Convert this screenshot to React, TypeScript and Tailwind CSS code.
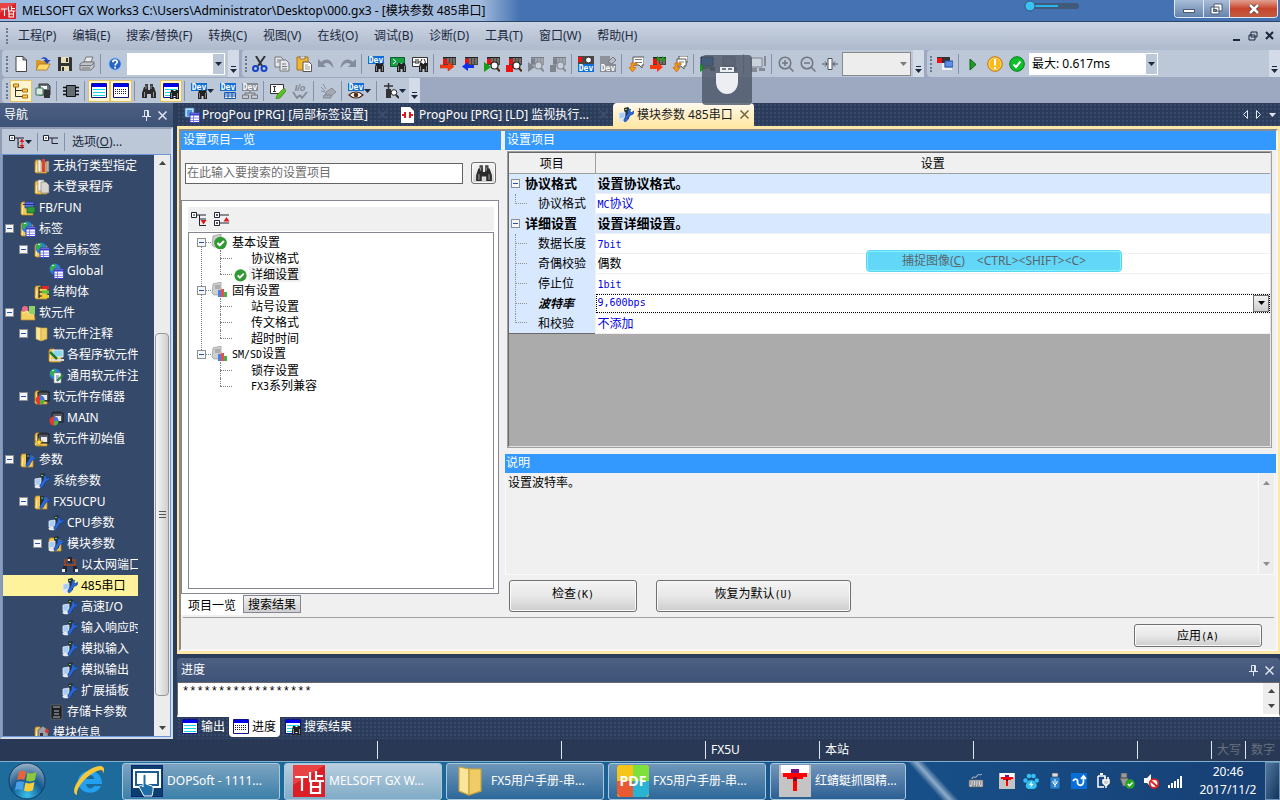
import { Fragment, type ReactNode } from 'react'

const UI = "font-[family-name:'Noto_Sans','Noto_Sans_CJK_SC',sans-serif]"
const SONG = "font-[family-name:'Noto_Sans_CJK_SC',sans-serif]"

/* ---------- shared icon parts ---------- */

const Plc = ({ off = false }: { off?: boolean }) => (
  <g>
    <path d="M3 1h13v8H3z" fill={off ? '#8d929b' : '#4a4742'} />
    <path d="M3 3h4v5H3z" fill={off ? '#7b808a' : '#f01010'} />
    <path d="M8 2v6M11 2v6M14 2v6" stroke={off ? '#b5bac4' : '#9a958c'} />
    <path d="M3 1.5h13" stroke={off ? '#777c86' : '#222'} />
  </g>
)

const Lens = ({ off = false }: { off?: boolean }) => (
  <g>
    <circle cx="10.5" cy="9.5" r="3.5" fill={off ? '#c9ced8' : '#fff'} stroke={off ? '#858a94' : '#222'} strokeWidth="1.2" />
    <path d="M12.8 12l3 3.4" stroke={off ? '#858a94' : '#4a2c10'} strokeWidth="2" />
  </g>
)

const Bino = () => (
  <g>
    <path d="M8 7h2.500v1h2V7H15l1 4v5h-3.500v-3h-2v3H7v-5z" fill="#222" />
    <path d="M8.500 10v5M14.500 10v5" stroke="#888" />
  </g>
)

const Dev = ({ y = 0, off = false }: { y?: number; off?: boolean }) => (
  <g>
    <path d={`M0 ${y}h16v8H0z`} fill={off ? '#868b95' : '#0f6fd6'} />
    <text x="8" y={y + 6.8} textAnchor="middle" fontSize="8" fontWeight="bold" fontFamily="DejaVu Sans Mono" fill="#fff">Dev</text>
  </g>
)

const Folder = () => (
  <g>
    <path d="M1 4l1-2h4l1 2h6v11H2l-1-1z" fill="#f3c65a" stroke="#b98a25" strokeWidth=".8" />
    <path d="M2 14l1-8" stroke="#fff0b8" />
  </g>
)

const Wrench = () => (
  <path d="M15.800 4l-2.300 1.500-1.500-1L12.500 2c-2.600.2-3.400 2.200-2.700 4L6 12.500c-.6 1.800 1.200 3 2.600 1.600L12.400 8c2 .3 3.900-1.500 3.400-4z" fill="#2a68d8" stroke="#123c86" strokeWidth=".6" />
)

const Tower = () => (
  <g>
    <path d="M6 1l4-1 1 1v11l-4 1z" fill="#2d3138" />
    <path d="M7 2.500h2" stroke="#68e04c" />
    <path d="M1 6l6-1v6l-6 1z" fill="#a9cdf2" stroke="#e4edf8" strokeWidth=".8" />
    <ellipse cx="4" cy="13.500" rx="3.500" ry="1.800" fill="#e6e8f0" />
  </g>
)

const Globe = () => (
  <g>
    <circle cx="7" cy="6" r="5.500" fill="#2b7fd4" />
    <path d="M3 3c2-3 5-2 5 0s-2 2-2 4-3 1-4-1zM9 5c2-1 3 1 2 3s-3 1-3-1z" fill="#37b04a" />
    <path d="M4 2.500h2" stroke="#cfe9ff" />
  </g>
)

const Grid = () => (
  <g>
    <path d="M6 6h9.500v9.500H6z" fill="#fff" stroke="#3c3cc8" />
    <path d="M6 7.500h9.500" stroke="#3c3cc8" strokeWidth="2" />
    <path d="M9.500 8v8M6 11h10M6 13.500h10" stroke="#6a6ae0" strokeWidth=".8" />
  </g>
)

const Chip = () => (
  <g>
    <path d="M4 3h11v9H4z" fill="#555a62" stroke="#15181c" />
    <path d="M6 1v2M9 1v2M12 1v2" stroke="#222" />
    <path d="M7 6h6v5H7z" fill="#e8eaee" />
  </g>
)

const Pie = () => (
  <g>
    <circle cx="6" cy="11" r="4.500" fill="#e23a2e" />
    <path d="M6 11V6.500A4.500 4.500 0 0110.500 11z" fill="#3a7be0" />
    <path d="M6 11h4.500A4.500 4.500 0 016 15.500z" fill="#48b848" />
  </g>
)

const Bubble = () => (
  <path d="M5 1h11v8h-2v3l-3-3H5z" fill="#fff" stroke="#555" />
)

const OrangeArrow = () => (
  <path d="M3 7h6v2H5.500v2.500H8L4.500 16 1 11.500h2z" fill="#f7981d" stroke="#c86c06" strokeWidth=".7" />
)

const Win = ({ dotted = false }: { dotted?: boolean }) => (
  <g>
    <path d="M.5.5h15v14H.5z" fill="#fff" stroke="#10108a" />
    <path d="M1 1h14v3H1z" fill="#0000f0" />
    {dotted ? (
      <path d="M2 6.500h12M2 8.500h12M2 10.500h12" stroke="#222" strokeDasharray="1 1" />
    ) : (
      <path d="M2 6.500h12M2 9.500h12M2 12.500h12" stroke="#12d6e4" />
    )}
  </g>
)

const icons: Record<string, ReactNode> = {
  new: <path d="M3 .5h7l3.500 3.500v11.500H3zM10 .5V4h3.500" fill="#fff" stroke="#444" />,
  open: (
    <g>
      <path d="M1 4h4l1 1h6v9H1z" fill="#d79a28" />
      <path d="M1 14l3-6h11l-3 6z" fill="#ffd86a" stroke="#a8741a" strokeWidth=".8" />
      <path d="M6 3c2-3 6-2 7 1h2.500L12 8 8.500 4h2c-1-1.500-2.500-1.500-4.500-1z" fill="#2046b8" />
    </g>
  ),
  save: (
    <g>
      <path d="M1 1h13l1 1v13H1z" fill="#333" />
      <path d="M4 1h8v6H4zM4 10h8v5H4z" fill="#e6e0b8" />
      <path d="M9 2h2v4H9zM5 11h2v4H5z" fill="#333" />
    </g>
  ),
  print: (
    <g stroke="#777" fill="#bfc3cb">
      <path d="M5 6l2-5h7l-2 5z" fill="#e8eaee" />
      <path d="M1 8l3-2h11v5l-3 3H1z" />
      <path d="M1 9.500h11M12 9.500l3-2.500M3 12h8" />
    </g>
  ),
  help: (
    <g>
      <circle cx="8" cy="8" r="6.500" fill="#2565c4" stroke="#a8c4ee" strokeWidth="1.500" />
      <path d="M5.800 6.300c0-3 4.600-2.800 4.500-.2 0 1.500-2.200 1.600-2.200 3.300" fill="none" stroke="#fff" strokeWidth="1.700" />
      <path d="M7.200 10.800h1.800v1.800H7.200z" fill="#fff" />
    </g>
  ),
  cut: (
    <g fill="none">
      <path d="M4 0l6 10M13 0L6 10" stroke="#333" strokeWidth="2" />
      <circle cx="3.500" cy="12.500" r="2.500" stroke="#1544c8" strokeWidth="2" />
      <circle cx="12" cy="12.500" r="2.500" stroke="#1544c8" strokeWidth="2" />
    </g>
  ),
  copy: (
    <g fill="#e4e8ef" stroke="#777">
      <path d="M1 1h6l2 2v8H1z" />
      <path d="M6 4h6l3 3v8H6z" />
      <path d="M3 4h3M3 6h2M8 8h4M8 10.500h5M8 13h5" />
    </g>
  ),
  paste: (
    <g>
      <path d="M1 1h11v13H1z" fill="#f2b632" stroke="#a87716" />
      <path d="M4 0h5v3H4z" fill="#ddd" stroke="#555" strokeWidth=".6" />
      <path d="M7 6h6l2.500 2.500v7H7z" fill="#fff" stroke="#555" />
      <path d="M9 9h3M9 11h5M9 13h5" stroke="#999" />
    </g>
  ),
  undo: <path d="M0 3v8h8L5.500 8.500c3-3 7-1 10 4C15 4 8 1 3.500 6z" fill="#858c99" />,
  redo: <path d="M16 3v8H8l2.500-2.500c-3-3-7-1-10 4C1 4 8 1 12.500 6z" fill="#858c99" />,
  devFind: <g><Dev /><Bino /></g>,
  cmdFind: <g><path d="M.5 1.500h14v9H.5z" fill="#16a046" stroke="#086428" /><path d="M3 3l3 2.500L3 8M7 8h5" stroke="#fff" fill="none" /><Bino /></g>,
  ladderFind: <g><path d="M.5 1.500h15v9H.5z" fill="#fff" stroke="#333" /><path d="M1 6h3M4 3v5M6 3v5M6 6h2M10 3L8.500 6 10 8M12 3l1.500 3L12 8" stroke="#222" fill="none" /><Bino /></g>,
  write: <g><Plc /><path d="M0 9h8V6l6 4.500L8 15v-3H0z" fill="#fa3a10" stroke="#b81c00" strokeWidth=".5" /></g>,
  read: <g><Plc /><path d="M12 9H6V6l-6 4.500L6 15v-3h6z" fill="#1030f0" /></g>,
  monStart: <g><Plc /><path d="M0 6l7 5-7 5z" fill="#12a012" /><Lens /></g>,
  monStop: <g><Plc /><path d="M0 9h7v7H0z" fill="#f01010" /><Lens /></g>,
  monStartOff: <g><Plc off /><path d="M0 6l7 5-7 5z" fill="#7f858f" /><Lens off /></g>,
  monStopOff: <g><Plc off /><path d="M0 9h6v7H0z" fill="#7f858f" /><Lens off /></g>,
  devMon: <g><path d="M0 0h16v8H0z" fill="#4a4742" /><path d="M0 1h4v5H0z" fill="#f01010" /><circle cx="10.500" cy="4" r="3" fill="#fff" stroke="#222" /><Dev y={8} /></g>,
  devMonOff: <g><path d="M0 0h10v8H0z" fill="#8d929b" /><path d="M8 6l5-5 3 3-4 4z" fill="#b9bec8" stroke="#777" /><Dev y={8} off /></g>,
  comment: <g><Bubble /><path d="M7 3.500h7M7 6.500h7" stroke="#777" /><OrangeArrow /></g>,
  verify: <g><Plc /><path d="M0 9h7V6l6 5-6 5v-3H0z" fill="#fa3a10" /><path d="M7 0l4 3-4 3zM12 0l4 3-4 3z" fill="#12a012" /></g>,
  comment2: <g><path d="M7 0h9v6H7z" fill="#fff" stroke="#555" /><path d="M5 3h9v7h-2v3l-3-3H5z" fill="#fff" stroke="#555" /><path d="M7 6h5" stroke="#777" /><OrangeArrow /></g>,
  simOn: <g><path d="M1 1h12v9H1z" fill="#2c79cc" stroke="#222" /><path d="M3 12h8" stroke="#222" /><path d="M0 8l6 4-6 4z" fill="#12a012" /><path d="M10 11h5v4h-5z" fill="#555" /></g>,
  simOff: <g><path d="M1 1h12v9H1z" fill="#a0a6b1" stroke="#6a7078" /><path d="M0 11h6v5H0zM10 11h5v4h-5z" fill="#777d88" /></g>,
  simSave: <g><path d="M1 2h11v9H1z" fill="#ccd2dc" stroke="#7d838d" /><path d="M1 12h6v4H1zM9 12h6v3H9zM14 0h2v10h-2z" fill="#858b95" /></g>,
  zoomIn: <g fill="none" stroke="#6f7681" strokeWidth="1.500"><circle cx="7" cy="7" r="5.800" /><path d="M4 7h6M7 4v6M11.500 11.500l4 4" /></g>,
  zoomOut: <g fill="none" stroke="#6f7681" strokeWidth="1.500"><circle cx="7" cy="7" r="5.800" /><path d="M4 7h6M11.500 11.500l4 4" /></g>,
  fit: <g><path d="M6 2.500h4v11H6z" fill="#fff" stroke="#4f5661" /><path d="M0 8h5M16 8h-5M3 5.500L5 8l-2 2.500M13 5.500L11 8l2 2.500" stroke="#4f5661" fill="none" /></g>,
  usb: <g><path d="M0 1h13v6H0z" fill="#333" /><path d="M0 2h5v5H0z" fill="#f01010" /><path d="M8 5h8v6H8z" fill="#5b8fe8" stroke="#2a50a8" /><path d="M6 7v6h5M11 13h4" stroke="#fff" fill="none" strokeWidth="1.500" /></g>,
  play: <path d="M5 3l6 5.500L5 14z" fill="#1f9a28" stroke="#0d6214" />,
  warn: <g><circle cx="8" cy="8" r="7.300" fill="#fbb91c" stroke="#c8780a" /><circle cx="8" cy="8" r="6" fill="none" stroke="#ffe39a" strokeWidth=".7" /><path d="M8 3v6.500M8 11v2" stroke="#fff" strokeWidth="2" /></g>,
  ok: <g><circle cx="8" cy="8" r="7.300" fill="#0fbf2c" stroke="#0a7a1c" /><path d="M4.500 8.500L7 11l4.500-5.500" stroke="#fff" strokeWidth="2" fill="none" /></g>,
  navTree: <g fill="#fff" stroke="#a86a12"><path d="M2.500 3v10.500H9M2.500 7.500H9" fill="none" stroke="#333" /><path d="M.5 1h5v3h-5zM9.500 6h5v3h-5zM9.500 12h5v3h-5z" fill="#ffcf50" /></g>,
  conn: <g><path d="M4 1h9l2 2v9H4z" fill="#6c727a" stroke="#333" /><path d="M6 3h6v3H6z" fill="#fff" /><path d="M1 5h7v7H1z" fill="#dfe8e2" stroke="#357a50" /><path d="M9 7h6v8H9z" fill="#333" /></g>,
  chip: <g><path d="M3.500 2.500h9v11h-9z" fill="#666c74" stroke="#111" /><path d="M0 4.500h3M0 8h3M0 11.500h3M13 4.500h3M13 8h3M13 11.500h3" stroke="#111" strokeWidth="1.600" /></g>,
  win: <Win />,
  winDots: <Win dotted />,
  winFind: <g><Win /><Bino /></g>,
  bino: (
    <g>
      <path d="M4 1h3v4H4zM9 1h3v4H9z" fill="#444" />
      <path d="M3 4h4v3h2V4h4l2 6v5h-5v-4H6v4H1v-5z" fill="#2b2b2b" />
      <path d="M3.500 9v5M12.500 9v5M5 3v3M10 3v3" stroke="#999" />
    </g>
  ),
  devTable: <g><Dev /><path d="M4.500 9.500h11v6h-11z" fill="#fff" stroke="#1b58b0" /><path d="M5 11h10M5 13h10M8 10v5M12 10v5" stroke="#1b58b0" /></g>,
  devTree: <g><Dev off /><path d="M8 8v2M3 12v-2h10v2" stroke="#777" fill="none" /><path d="M.5 12h6v3.500h-6zM9.500 12h6v3.500h-6z" fill="#c5cad4" stroke="#777" /></g>,
  edit: <g><path d="M.5 1.500h13v9H.5z" fill="#fff" stroke="#333" /><path d="M3 3.500h3M4.500 3.500v5M3 8.500h3" stroke="#333" /><path d="M7 12l7-7 2 3-6 7-4 1z" fill="#5cc01c" stroke="#2d7008" strokeWidth=".6" /></g>,
  io: <g><text x="8" y="8" textAnchor="middle" fontSize="9" fontStyle="italic" fontWeight="bold" fontFamily="Liberation Sans" fill="#7f8590">I/o</text><path d="M1 9l4 6 3-3M8 12l2 3 5-6" fill="none" stroke="#858b95" strokeWidth="1.800" /></g>,
  spray: <g fill="#a3a8b2" stroke="#7d828c" strokeWidth=".8"><path d="M1 4l4 4M3 1l3 5M1 8l4 1" /><path d="M6 9l6-4 4 4-6 5H5z" /><path d="M4 12h7v3H3z" /></g>,
  devEye: <g><Dev /><path d="M1 12c4-4 10-4 14 0-4 4-10 4-14 0z" fill="#fff" stroke="#4a2c1a" strokeWidth="1.200" /><circle cx="8" cy="12" r="2.300" fill="#5a2a12" /></g>,
  trace: <g><path d="M3 6h5v9H3z" fill="#333" /><path d="M5.500 0v6M1 3h9" stroke="#333" strokeWidth="1.500" /><circle cx="11" cy="9.500" r="2.800" fill="#fff" stroke="#222" /><path d="M13 12l3 3" stroke="#222" strokeWidth="1.800" /></g>,

  books: <g><Folder /><path d="M4 2h3v12H4z" fill="#f3efe8" stroke="#777" strokeWidth=".5" /><path d="M8 1h3v13H8z" fill="#e0403a" /><path d="M12 3h3v11h-3z" fill="#b8b2aa" stroke="#555" strokeWidth=".5" /></g>,
  pages: <g><Folder /><path d="M4 1h6v11H4z" fill="#f4f1ea" stroke="#888" strokeWidth=".6" /><path d="M7 3h5l3 3v8H7z" fill="#d9d6d0" stroke="#777" strokeWidth=".6" /></g>,
  fbfun: <g><Folder /><path d="M5 2h9v6H5z" fill="#5a6fe0" stroke="#24348c" strokeWidth=".7" /><path d="M3 4.500h12" stroke="#24348c" /><path d="M7 7h8v6H7z" fill="#2f9a3c" stroke="#125c1c" strokeWidth=".7" /></g>,
  label: <g><Folder /><Globe /><Grid /></g>,
  globeTable: <g><Globe /><Grid /></g>,
  struct: <g><Folder /><path d="M5 3v11M5 4h4M5 8h4M5 12h4" stroke="#111" /><path d="M8 2h7v3H8z" fill="#e02828" /><path d="M8 6.500h7v3H8z" fill="#58c83a" /><path d="M8 11h7v3H8z" fill="#e8d020" /></g>,
  device: <g><path d="M1 6h13l1 9H1z" fill="#f4cf62" stroke="#b98a25" strokeWidth=".7" /><circle cx="5" cy="4" r="3" fill="#f06a8a" /><path d="M9 1h6v8H9z" fill="#8cd06a" /><path d="M3 8l4-2 3 4" stroke="#fff0b8" fill="none" /></g>,
  folder: <g><path d="M2 1l5 1v13l-5-2z" fill="#fbe59a" stroke="#c9a43e" strokeWidth=".6" /><path d="M7 2h6v11l-6 2z" fill="#f0cc66" stroke="#c9a43e" strokeWidth=".6" /></g>,
  progComment: <g><Folder /><path d="M5 3h10v7H5z" fill="#8ad6ea" stroke="#eee" /><path d="M4 13h12" stroke="#ddd" strokeWidth="2" /><path d="M2 5l7 7" stroke="#1f7a2a" strokeWidth="2.500" /></g>,
  globeEdit: <g><Globe /><path d="M6 5h7v10H6z" fill="#fff" stroke="#888" strokeWidth=".6" /><path d="M8 8h3M8 10h3M8 12h3" stroke="#4a6ab8" /><path d="M9 13l6-6" stroke="#2f8a34" strokeWidth="2.200" /></g>,
  memFolder: <g><Folder /><Chip /><Pie /></g>,
  mem: <g><Chip /><Pie /></g>,
  memInit: <g><Folder /><Chip /><path d="M5 7l1 3h3l-2.500 2 1 3L5 13.500 2.500 15l1-3L1 10h3z" fill="#ffe04a" stroke="#b07a10" strokeWidth=".6" /></g>,
  paramFolder: <g><Folder /><path d="M6 2h4v11H6z" fill="#2d3138" /><path d="M7 4h2" stroke="#68e04c" /><Wrench /></g>,
  param: <g><Tower /><Wrench /></g>,
  moduleFolder: <g><Folder /><Tower /><Wrench /></g>,
  network: <g><path d="M3 12V3h10v9M3 8h10" fill="none" stroke="#a8481a" strokeWidth="1.500" /><path d="M6 0h4v6H6zM1 9h4v6H1zM11 9h4v6h-4z" fill="#23262b" /><path d="M6 2h2v2H6zM0 12h3v3H0zM13 12h3v3h-3z" fill="#e8ecf2" /></g>,
  card: <g><path d="M3 1h10l1 1v13H3z" fill="#1d1f23" stroke="#777" strokeWidth=".6" /><path d="M5 3h7M6 7h5M6 10h5M5 13h7" stroke="#b9bdc4" /></g>,
  info: <g><Folder /><path d="M4 5l5-4 5 4v10H4z" fill="#9aa0a8" stroke="#444" strokeWidth=".6" /><path d="M6 8h3v7H6z" fill="#333" /><circle cx="13" cy="6" r="2" fill="#e03030" /></g>,
  pou: <g><path d="M1 1h9v9H1z" fill="#b9dcf6" stroke="#3d7cc0" strokeWidth=".7" /><path d="M3 3h5v6H3z" fill="#4e9ae0" /><Grid /></g>,
  ladder: <g><path d="M2 0h9l4 4v12H2z" fill="#fff" /><path d="M3 8h3M11 8h3M6 5v6M11 5v6" stroke="#e01818" strokeWidth="2" /></g>,
  done: <g><circle cx="8" cy="9" r="6.500" fill="#2f9a32" /><path d="M5 9l2.300 2.300L11.500 7" stroke="#fff" strokeWidth="2" fill="none" /></g>,
  groupDone: <g><path d="M2 2l8-2v13H3l-2-2z" fill="#cfcfcf" stroke="#888" strokeWidth=".6" /><circle cx="9.500" cy="9" r="6.300" fill="#2f9a32" /><path d="M6.500 9l2.300 2.300L13 7" stroke="#fff" strokeWidth="2" fill="none" /></g>,
  group: <g><path d="M2 2l8-2v13H3l-2-2z" fill="#cfcfcf" stroke="#888" strokeWidth=".6" /><path d="M4 4h5M4 6h5" stroke="#888" /><path d="M7 8h3v7H7z" fill="#3d86ee" /><path d="M10 7h3v8h-3z" fill="#f0503a" /><path d="M13 10h3v5h-3z" fill="#48b048" /></g>,
  collapse: <g fill="none" stroke="#223"><path d="M.5 1.500h5v5h-5z" fill="#fff" /><path d="M2 4h2M6 4h9M9 4v9.500M9 9h1M9 13.500h6" /><path d="M13 5v10" stroke="#e01818" /><path d="M10.500 8h5L13 5zM10.500 11h5L13 14z" fill="#e01818" stroke="none" /></g>,
  collapseAll: <g fill="none" stroke="#223"><path d="M.5 1.500h5v5h-5z" fill="#fff" /><path d="M2 4h2M6 4h9M9 4v5.500h6" /></g>,
  foldDown: <g fill="none" stroke="#223"><path d="M.5 1.500h5v5h-5z" fill="#fff" /><path d="M2 4h2M6 4h9M8.500 4v10.500H15M9 8h6" /><path d="M9.500 9h6l-3 4.500z" fill="#e01818" stroke="none" /></g>,
  foldUp: <g fill="none" stroke="#223"><path d="M.5 1.500h5v5h-5zM.5 9.500h5v5h-5z" fill="#fff" /><path d="M2 4h2M3 3v2M2 12h2M3 11v2M6 4h9M6 12h9" /><path d="M9.500 10.500h6l-3-4.500z" fill="#e01818" stroke="none" /></g>,
  keyboard: <g><path d="M1 7h14v7H1z" fill="#d8dade" stroke="#555" strokeWidth=".8" /><path d="M2 9h12M2 11h12M4 12.800h8" stroke="#555" strokeDasharray="1.500 1" /><path d="M4 6c0-4 4 0 5-3s3 0 5-2" stroke="#ccc" fill="none" /></g>,
  paw: <g fill="#35c0f4"><circle cx="2.500" cy="7.500" r="2.200" /><circle cx="6" cy="3" r="2.300" /><circle cx="10.500" cy="3" r="2.300" /><circle cx="13.800" cy="7.500" r="2.200" /><path d="M8 7c-3 0-6 4-5 7s9 3 10.500 0S11 7 8 7z" /><path d="M9 8l-3 4h2l-1 3 3.500-4h-2z" fill="#fff" /></g>,
  stick: <g><path d="M5 0h6v5H5z" fill="#ddd" stroke="#555" strokeWidth=".7" /><path d="M3 4h10v12H3z" fill="#2b84d0" stroke="#0e3a68" strokeWidth=".7" /><path d="M8 6v8M6 8v2l2 2M10 8v2l-2 2" stroke="#fff" fill="none" /></g>,
  sync: <g><path d="M0 0h16v16H0z" fill="#0a6ed8" /><path d="M2 8c2-3 5-2 4.500 1-.5 4 6 5 6-1V4M10 6l2.500-3L15 6" stroke="#fff" strokeWidth="1.800" fill="none" /></g>,
  power: <g stroke="#fff" fill="none" strokeWidth="1.500"><path d="M3 3h7v2M3 3v11h6" /><path d="M5 1h3" strokeWidth="2" /><path d="M8 7h6v3l-2 2h-2L8 10zM10 4v3M13 4v3M11 12v3" fill="#ccc" /></g>,
  eject: <g><path d="M2 0h6v5H2zM1 5h8v8H4z" fill="#999" stroke="#555" strokeWidth=".7" /><circle cx="11" cy="11" r="4.800" fill="#28a428" /><path d="M8.800 11l1.700 1.700 3-3.200" stroke="#fff" strokeWidth="1.500" fill="none" /></g>,
  mute: <g><path d="M1 5h3l4-4v13l-4-4H1z" fill="#fff" /><circle cx="11" cy="10.500" r="4.300" fill="#fff" stroke="#e02020" strokeWidth="1.800" /><path d="M8 8l6 5.500" stroke="#e02020" strokeWidth="1.800" /></g>,
  signal: <path d="M1 12h2v3H1zM4 10h2v5H4zM7 8h2v7H7zM10 6h2v9h-2zM13 3h2v12h-2z" fill="#fff" />,
  dragonfly: <g><path d="M0 0h16v16H0z" fill="#c4c4c4" /><path d="M1 0h14v4H1z" fill="#fff" /><path d="M6 2h4v2H6z" fill="#7a0f8a" /><path d="M2 4h12v2h-2v1H9v6H7V7H4V6H2z" fill="#f00" /><path d="M7 6h2v2H7z" fill="#7a0f2a" /></g>,
  melsoft: <g><path d="M0 0h16v16H0z" fill="#dc1f26" /><path d="M0 0h16L0 10z" fill="#f05a58" opacity=".6" /><path d="M1 6h6.500M4.500 6v7M8.500 3.500V8M8 8h7.500M11.500 3v5M11.500 5.500h3.500M9 8v6h4.500V8M9 11h4.500" stroke="#fff" strokeWidth="1.100" fill="none" /></g>,
}

const Icon = ({ name, size = 16 }: { name: string; size?: number }) => (
  <svg width={size} height={size} viewBox="0 0 16 16" className="shrink-0" aria-hidden="true">
    {icons[name]}
  </svg>
)

const Caret = ({ className = '' }: { className?: string }) => (
  <svg width="7" height="4" viewBox="0 0 7 4" className={`shrink-0 ${className}`} aria-hidden="true">
    <path d="M0 0h7L3.500 4z" fill="currentColor" />
  </svg>
)

const Cross = ({ className = '' }: { className?: string }) => (
  <svg width="9" height="9" viewBox="0 0 9 9" className={className} aria-hidden="true">
    <path d="M.5.500l8 8M8.500.500l-8 8" stroke="currentColor" strokeWidth="1.500" />
  </svg>
)

const Pin = () => (
  <svg width="9" height="11" viewBox="0 0 9 11" aria-hidden="true">
    <path d="M2.500 6V.5h4V6M0 6.500h9M4.500 7v4M5.500 1v5" stroke="#dfe6f2" fill="none" />
  </svg>
)

/* Latin runs are set in a half-width face next to full-width characters */
const Song = ({ text }: { text: string }) => (
  <>
    {text.split(/([ -~]+)/).map((part, i) =>
      i % 2 ? (
        <span key={i} className="font-[family-name:'DejaVu_Sans_Mono',monospace] text-[10px]">{part}</span>
      ) : (
        <Fragment key={i}>{part}</Fragment>
      ),
    )}
  </>
)

/* ---------- toolbars ---------- */

const Grip = () => <span className="mx-[2px] h-4 shrink-0 border-l-2 border-dotted border-[#6b7a94]" />
const Sep = () => <span className="mx-[2px] h-5 w-[2px] shrink-0 border-l border-[#8591a8]" />

const Overflow = () => (
  <button aria-label="更多" className="flex w-[11px] shrink-0 flex-col items-center justify-end gap-[2px] self-stretch bg-[#d3dbe8] pb-1 text-[#1b293e]">
    <span className="h-px w-[5px] bg-[#1b293e]" />
    <Caret />
  </button>
)

/* '|' is a separator, '*' marks a pressed button, '+' one with a drop-down arrow */
const Tools = ({ list }: { list: string }) => (
  <>
    {list.split(' ').map((item, i) => {
      if (item === '|') return <Sep key={i} />
      const name = item.replace(/[*+]/, '')
      if (item.endsWith('+'))
        return (
          <button key={i} aria-label={name} className="flex h-[22px] w-[29px] shrink-0 items-center pl-[3px] text-[#1b293e]">
            <Icon name={name} />
            <Caret />
          </button>
        )
      return (
        <button
          key={i}
          aria-label={name}
          className={`flex h-[22px] w-[22px] shrink-0 items-center justify-center ${item.endsWith('*') ? 'border border-[#e5c365] bg-[#fdf4d0]' : ''}`}
        >
          <Icon name={name} />
        </button>
      )
    })}
  </>
)

const Bar = ({ children, className = '' }: { children: ReactNode; className?: string }) => (
  <div role="toolbar" className={`flex items-center rounded-sm bg-[#bcc7d8] ${className}`}>{children}</div>
)

/* ---------- navigation ---------- */

type NavRow = [level: number, icon: string, label: string, open?: boolean]

const navRows: NavRow[] = [
  [1, 'books', '无执行类型指定'],
  [1, 'pages', '未登录程序'],
  [0, 'fbfun', 'FB/FUN'],
  [0, 'label', '标签', true],
  [1, 'label', '全局标签', true],
  [2, 'globeTable', 'Global'],
  [1, 'struct', '结构体'],
  [0, 'device', '软元件', true],
  [1, 'folder', '软元件注释', true],
  [2, 'progComment', '各程序软元件'],
  [2, 'globeEdit', '通用软元件注'],
  [1, 'memFolder', '软元件存储器', true],
  [2, 'mem', 'MAIN'],
  [1, 'memInit', '软元件初始值'],
  [0, 'paramFolder', '参数', true],
  [1, 'param', '系统参数'],
  [1, 'paramFolder', 'FX5UCPU', true],
  [2, 'param', 'CPU参数'],
  [2, 'moduleFolder', '模块参数', true],
  [3, 'network', '以太网端口'],
  [3, 'param', '485串口'],
  [3, 'param', '高速I/O'],
  [3, 'param', '输入响应时'],
  [3, 'param', '模拟输入'],
  [3, 'param', '模拟输出'],
  [3, 'param', '扩展插板'],
  [2, 'card', '存储卡参数'],
  [1, 'info', '模块信息'],
]

const navIndent = ['pl-[2px]', 'pl-4', 'pl-[30px]', 'pl-11']

const Toggle = () => (
  <button aria-label="折叠" className="flex h-[9px] w-[9px] shrink-0 items-center justify-center border border-[#8a8f98] bg-[#f4f6fa]">
    <span className="h-px w-[5px] bg-[#2a4fae]" />
  </button>
)

const NavPanel = () => (
  <aside className="flex w-[173px] shrink-0 flex-col">
    <div className="flex h-6 shrink-0 items-center bg-linear-to-b from-[#4d6082] to-[#3d5277] pr-[6px] pl-1 text-white">
      <h2 className="flex-1">导航</h2>
      <button aria-label="固定" className="mr-[7px]"><Pin /></button>
      <button aria-label="关闭"><Cross className="text-[#dfe6f2]" /></button>
    </div>
    <div className="flex min-h-0 flex-1 flex-col border-2 border-[#d3dcea] border-t-[#8e9bb2] border-l-[#8e9bb2]">
      <div className="flex h-[25px] shrink-0 items-center bg-[#bcc7d8] pl-[7px] text-[#1b293e]">
        <button aria-label="全部折叠" className="flex items-center"><Icon name="collapse" /><Caret /></button>
        <span className="mx-[5px] h-[18px] w-px bg-[#8591a8]" />
        <button aria-label="折叠到上级"><Icon name="collapseAll" /></button>
        <span className="mx-[5px] h-[18px] w-px bg-[#8591a8]" />
        <button className="ml-[2px]">选项(<u>O</u>)...</button>
      </div>
      <div className="flex min-h-0 flex-1 border border-[#6a96d8] bg-[#35496a]">
        <ul className="mr-4 min-w-0 flex-1 overflow-hidden">
          {navRows.map(([level, icon, label, open], i) => (
            <li
              key={i}
              className={`flex h-[21px] items-center whitespace-nowrap ${navIndent[level]} ${label === '485串口' ? 'bg-[#fff29d] text-black' : 'text-white'}`}
            >
              {open ? <Toggle /> : <span className="w-[9px] shrink-0" />}
              <span className="ml-[6px]"><Icon name={icon} /></span>
              <span className="ml-[3px]">{label}</span>
            </li>
          ))}
        </ul>
        <div className="flex w-4 shrink-0 flex-col items-center bg-[#ececec] py-[6px] text-[#444]">
          <Caret className="rotate-180" />
          <div className="min-h-0 flex-[166]" />
          <div className="flex min-h-0 w-[14px] flex-[356] flex-col items-center justify-center gap-[2px] rounded-sm border border-[#979797] bg-linear-to-r from-[#f6f6f6] to-[#cfcfd2]">
            <span className="h-px w-[7px] bg-[#555]" />
            <span className="h-px w-[7px] bg-[#555]" />
            <span className="h-px w-[7px] bg-[#555]" />
          </div>
          <div className="min-h-0 flex-[30]" />
          <Caret />
        </div>
      </div>
    </div>
  </aside>
)

/* ---------- settings document ---------- */

type Group = { name: string; icon: string; items: string[] }

const groups: Group[] = [
  { name: '基本设置', icon: 'groupDone', items: ['协议格式', '详细设置'] },
  { name: '固有设置', icon: 'group', items: ['站号设置', '传文格式', '超时时间'] },
  { name: 'SM/SD设置', icon: 'group', items: ['锁存设置', 'FX3系列兼容'] },
]

const ItemTree = () => (
  <ul className="px-2 pt-px text-black">
    {groups.map((g, gi) => (
      <li key={g.name} className="relative">
        {gi < groups.length - 1 && <span className="absolute top-3 bottom-[-4px] left-1 border-l border-dotted border-[#808080]" />}
        <div className="flex h-4 items-center">
          <Toggle />
          <span className="w-[5px] border-t border-dotted border-[#808080]" />
          <Icon name={g.icon} />
          <span className="ml-[5px] leading-4"><Song text={g.name} /></span>
        </div>
        <ul className="ml-[23px]">
          {g.items.map((item, i) => (
            <li key={item} className="relative flex h-4 items-center">
              <span className={`absolute top-0 left-0 border-l border-dotted border-[#808080] ${i === g.items.length - 1 ? 'h-2' : 'h-4'}`} />
              <span className="w-3 border-t border-dotted border-[#808080]" />
              <span className="ml-px flex w-4">{item === '详细设置' && <Icon name="done" size={15} />}</span>
              <span className={`px-[2px] leading-4 ${item === '详细设置' ? 'bg-[#f0f0f0]' : ''}`}><Song text={item} /></span>
            </li>
          ))}
        </ul>
      </li>
    ))}
  </ul>
)

const btn = 'rounded-[3px] border border-[#707070] bg-linear-to-b from-[#f4f4f4] via-[#e8e8e8] to-[#cdcdcd] text-center shadow-[inset_0_0_0_1px_#fafafa] text-black'

const ItemPane = () => (
  <section className="flex w-[320px] shrink-0 flex-col">
    <h2 className="h-[19px] shrink-0 bg-[#3399ff] px-[2px] leading-4 text-white">设置项目一览</h2>
    <div className="flex h-[50px] shrink-0 items-center pr-[5px] pb-1 pl-1">
      <input
        type="text"
        aria-label="搜索设置项目"
        placeholder="在此输入要搜索的设置项目"
        className="h-[21px] min-w-0 flex-1 border border-[#646464] bg-white px-px pb-1 placeholder:text-[#6d6d6d]"
      />
      <button aria-label="搜索" className={`ml-2 flex h-[22px] w-[25px] items-center justify-center ${btn}`}>
        <Icon name="bino" size={18} />
      </button>
    </div>
    <div className="mr-[2px] flex min-h-0 flex-1 flex-col border border-[#868694] bg-white p-1 pl-[6px]">
      <div className="mt-[2px] flex h-6 shrink-0 items-center gap-[7px] bg-[#f0f0f0] pl-[3px]">
        <button aria-label="全部折叠"><Icon name="foldDown" /></button>
        <button aria-label="全部展开"><Icon name="foldUp" /></button>
      </div>
      <div className="mt-px min-h-0 flex-1 overflow-hidden border border-[#868694]">
        <ItemTree />
      </div>
    </div>
    <div role="tablist" className="flex h-[23px] shrink-0 items-start text-black">
      <button role="tab" className="h-[21px] bg-white px-[7px] leading-[18px]">项目一览</button>
      <button role="tab" className="mt-px h-[18px] border border-[#868694] bg-linear-to-b from-[#f2f2f2] to-[#cfcfcf] px-1 leading-4">搜索结果</button>
    </div>
  </section>
)

const rows: { name: string; value: string; head?: boolean; last?: boolean; plain?: boolean }[] = [
  { name: '协议格式', value: '设置协议格式。', head: true },
  { name: '协议格式', value: 'MC协议', last: true },
  { name: '详细设置', value: '设置详细设置。', head: true },
  { name: '数据长度', value: '7bit' },
  { name: '奇偶校验', value: '偶数', plain: true },
  { name: '停止位', value: '1bit' },
  { name: '波特率', value: '9,600bps' },
  { name: '和校验', value: '不添加', last: true },
]

const SettingTable = () => (
  <div className="relative min-h-0 flex-1 overflow-hidden border border-[#696969] border-r-[#e3e3e3] border-b-[#e3e3e3] bg-[#ababab]">
    <table className="w-full table-fixed border-collapse border-b border-[#696969] text-black">
      <thead>
        <tr className="h-5 bg-[#f0f0f0]">
          <th className="w-[86px] border-r border-b border-[#a0a0a0] p-0 font-normal leading-[18px]">项目</th>
          <th className="border-b border-[#a0a0a0] p-0 font-normal leading-[18px]">设置</th>
        </tr>
      </thead>
      <tbody>
        {rows.map((r, i) => (
          <tr key={i} className={`h-5 ${r.head ? 'bg-[#d7e8ff] text-[13px] font-bold' : 'bg-white'}`}>
            <th scope="row" className={`border-r border-[#f0f0f0] bg-[#d7e8ff] p-0 text-left ${r.head ? '' : 'font-normal'}`}>
              <div className="relative flex h-[19px] items-center leading-[18px]">
                {r.head ? (
                  <span className="ml-[2px] flex w-[14px]"><Toggle /></span>
                ) : (
                  <>
                    <span className={`absolute top-0 left-[6px] border-l border-dotted border-[#909090] ${r.last ? 'h-[10px]' : 'h-5'}`} />
                    <span className="mr-[11px] ml-[6px] w-3 border-t border-dotted border-[#909090]" />
                  </>
                )}
                {r.name === '波特率' ? <span className="font-bold italic">{r.name}</span> : r.name}
              </div>
            </th>
            <td className="border-b border-[#f0f0f0] p-0">
              {r.name === '波特率' ? (
                <div className="flex h-[19px] items-stretch border border-dotted border-black">
                  <select
                    aria-label="波特率"
                    className="min-w-0 flex-1 appearance-none bg-white px-px font-[family-name:'DejaVu_Sans_Mono',monospace] text-[10px] text-[#0000e0]"
                  >
                    <option>9,600bps</option>
                  </select>
                  <span className="flex w-4 items-center justify-center border border-[#707070] bg-linear-to-b from-[#f2f2f2] to-[#cdcdcd]"><Caret /></span>
                </div>
              ) : (
                <div className={`h-[19px] px-[2px] leading-[18px] ${r.head || r.plain ? '' : 'text-[#0000e0]'}`}><Song text={r.value} /></div>
              )}
            </td>
          </tr>
        ))}
      </tbody>
    </table>
    <div className={`absolute top-[97px] left-[357px] flex h-[22px] w-64 items-center justify-center gap-3 rounded-sm border border-[#5cd3f5] bg-[#62d7f7] text-[#59666e] shadow-[inset_0_0_0_1px_#7ff3fb] ${UI}`}>
      <span>捕捉图像(<u>C</u>)</span>
      <span>&lt;CTRL&gt;&lt;SHIFT&gt;&lt;C&gt;</span>
    </div>
  </div>
)

const SettingPane = () => (
  <section className="ml-1 flex min-w-0 flex-1 flex-col">
    <h2 className="h-[19px] shrink-0 bg-[#3399ff] px-[2px] leading-4 text-white">设置项目</h2>
    <div className="mt-px mr-1 ml-[2px] flex min-h-0 flex-1 flex-col border border-[#a0a0a0]">
      <SettingTable />
    </div>
    <h2 className="mt-[6px] h-[19px] shrink-0 bg-[#3399ff] px-px leading-4 text-white">说明</h2>
    <div className="mr-px flex h-[102px] shrink-0 border border-t-0 border-[#fbfbfb] pl-[2px] text-black">
      <p className="flex-1 leading-[18px]">设置波特率。</p>
      <div className="flex w-4 flex-col items-center justify-between border-l border-[#fafafa] bg-[#ededed] py-2 text-[#8e8e8e]">
        <Caret className="rotate-180" />
        <Caret />
      </div>
    </div>
    <div className="flex h-[42px] shrink-0 items-center gap-[19px] pl-1">
      <button className={`h-8 w-32 pb-1 ${btn}`}><Song text="检查(K)" /></button>
      <button className={`h-8 w-[195px] pb-1 ${btn}`}><Song text="恢复为默认(U)" /></button>
    </div>
  </section>
)

const strip = 'bg-[#2c3d5b] bg-[radial-gradient(#374a6c_1px,transparent_1px)] bg-[size:4px_4px]'

const Document = () => (
  <div className="flex min-h-0 flex-1 flex-col">
    <div role="tablist" className={`flex h-[23px] shrink-0 items-stretch text-white ${strip}`}>
      <button role="tab" className="flex items-center pr-3 pl-[7px]">
        <Icon name="pou" />
        <span className="mr-[10px] ml-[2px]">ProgPou [PRG] [局部标签设置]</span>
        <Cross className="text-[#41506a]" />
      </button>
      <button role="tab" className="flex items-center pr-[5px]">
        <Icon name="ladder" />
        <span className="mr-[10px] ml-1">ProgPou [PRG] [LD] 监视执行...</span>
        <Cross className="text-[#41506a]" />
      </button>
      <button role="tab" aria-selected="true" className="flex items-center rounded-t-sm bg-linear-to-b from-[#fffaf0] via-[#fff0c8] to-[#ffe8a6] px-[5px] text-[#1b1b1b]">
        <Icon name="param" />
        <span className="mr-[7px] ml-[3px]">模块参数 485串口</span>
        <Cross className="text-[#75633d]" />
      </button>
      <div className="ml-auto flex items-center gap-[7px] pr-1 text-[#dfe6f2]">
        <svg width="20" height="9" viewBox="0 0 20 9" aria-hidden="true"><path d="M5.500.500v8l-4-4zM14.500.500v8l4-4z" fill="none" stroke="#dfe6f2" /></svg>
        <Caret />
      </div>
    </div>
    <div className="flex min-h-0 flex-1 flex-col border-x-2 border-y-[3px] border-[#ffe8a6]">
      <div className={`flex min-h-0 flex-1 flex-col border-2 border-[#8a8a8a] border-r-[#f8f8f8] border-b-[#f8f8f8] bg-[#f0f0f0] ${SONG}`}>
        <div className="flex min-h-0 flex-1">
          <ItemPane />
          <SettingPane />
        </div>
        <div className="mx-[2px] flex h-8 shrink-0 items-center justify-end border-t border-[#a0a0a0] pt-1 pr-3">
          <button className={`h-[23px] w-32 leading-4 ${btn}`}><Song text="应用(A)" /></button>
        </div>
      </div>
    </div>
  </div>
)

const Progress = () => (
  <section className="mt-1 shrink-0">
    <div className="flex h-6 items-center rounded-t-sm bg-linear-to-b from-[#4d6082] to-[#3d5277] pr-[6px] pl-1 text-white">
      <h2 className="flex-1">进度</h2>
      <button aria-label="固定" className="mr-[7px]"><Pin /></button>
      <button aria-label="关闭"><Cross className="text-[#dfe6f2]" /></button>
    </div>
    <div className="flex h-[35px] border border-b-[3px] border-[#696969] border-b-white bg-white text-black">
      <p className="flex-1 pl-1 font-[family-name:'Liberation_Mono',monospace] leading-[18px]">******************</p>
      <div className="flex w-4 flex-col items-center justify-between bg-[#ededed] py-[6px] text-[#444]">
        <Caret className="rotate-180" />
        <Caret />
      </div>
    </div>
    <div role="tablist" className={`flex h-[22px] items-start text-white ${strip}`}>
      <button role="tab" className="flex h-5 items-center gap-[3px] pr-1 pl-[5px]"><Icon name="win" />输出</button>
      <button role="tab" aria-selected="true" className="flex h-5 items-center gap-[3px] rounded-b-sm bg-white px-1 text-black"><Icon name="winDots" />进度</button>
      <button role="tab" className="flex h-5 items-center gap-[3px] px-[5px]"><Icon name="winFind" />搜索结果</button>
    </div>
  </section>
)

/* ---------- status bar and taskbar ---------- */

const StatusBar = () => (
  <footer className="flex h-[22px] shrink-0 items-center bg-[#293955] text-white [&>span]:h-[18px] [&>span]:border-l [&>span]:border-[#dfe6f2] [&>span]:pl-[5px] [&>span]:leading-[18px]">
    <div className="w-[377px]" />
    <span className="w-[184px]" />
    <span className="w-36" />
    <span className="w-[114px]">FX5U</span>
    <span className="w-[154px]">本站</span>
    <span className="w-[164px]" />
    <span className="flex-1" />
    <span className="w-[34px] text-[#68707e]">大写</span>
    <span className="w-[35px] text-[#68707e]">数字</span>
  </footer>
)

const DopIcon = () => (
  <svg width="32" height="32" viewBox="0 0 32 32" aria-hidden="true">
    <path d="M0 0h32v32H0z" fill="#0d3f6e" stroke="#10107a" />
    <path d="M3 5h26v17H3z" fill="#1c5d92" stroke="#fff" strokeWidth="2" />
    <path d="M6 8h20v11H6z" fill="#fff" />
    <path d="M12 11c0-2 3-2 3 0v8l6 2c2 1 1 5 0 10h-8l-5-9c0-2 3-2 4 0z" fill="#1f6ea8" stroke="#fff" strokeWidth="1" />
  </svg>
)

const PdfIcon = () => (
  <svg width="32" height="32" viewBox="0 0 32 32" aria-hidden="true">
    <rect width="32" height="32" rx="3" fill="#f5c518" />
    <path d="M16 0h13l3 3v13H16z" fill="#7ee03a" />
    <path d="M0 16h16v16H3l-3-3z" fill="#e85a34" />
    <path d="M16 16h16v13l-3 3H16z" fill="#28b4d2" />
    <text x="16" y="21" textAnchor="middle" fontSize="14" fontWeight="bold" fontFamily="Open Sans" fill="#fff">PDF</text>
  </svg>
)

const tasks: { label: string; icon: ReactNode; look: string }[] = [
  { label: 'DOPSoft - 1111...', icon: <DopIcon />, look: 'w-[158px] from-[#7ba3c0] to-[#3a80a8]' },
  { label: 'MELSOFT GX W...', icon: <Icon name="melsoft" size={32} />, look: 'w-[158px] from-[#b9cede] to-[#7fabc6]' },
  { label: 'FX5用户手册-串...', icon: <Icon name="folder" size={32} />, look: 'w-[158px] from-[#6e97ba] to-[#2b6899]' },
  { label: 'FX5用户手册-串...', icon: <PdfIcon />, look: 'w-[158px] from-[#6e97ba] to-[#2b6899]' },
  { label: '红蜻蜓抓图精...', icon: <Icon name="dragonfly" size={32} />, look: 'w-[136px] from-[#7396bb] to-[#2b5f94]' },
]

const Taskbar = () => (
  <nav className="flex h-[39px] shrink-0 items-center border-t border-[#7fb0d0] bg-[linear-gradient(90deg,#1e6c9c_0,#1c6796_40%,#175089_70%,#173f74_100%)] text-white">
    <button aria-label="开始" className="ml-2">
      <svg width="38" height="38" viewBox="0 0 38 38">
        <defs>
          <radialGradient id="orb" cx=".5" cy=".9" r=".9"><stop offset="0" stopColor="#39c1ec" /><stop offset=".5" stopColor="#14588e" /><stop offset="1" stopColor="#9db4c8" /></radialGradient>
        </defs>
        <circle cx="19" cy="19" r="18" fill="url(#orb)" stroke="#0f3a60" />
        <path d="M11 10c3-2 5-1 7 0l-1.500 8c-3-1-5-1-7.500 0z" fill="#e8633a" />
        <path d="M19.500 10.500c3 1.500 6 1 9-.5l-1.500 8c-3 2-6 1.500-9 .5z" fill="#8cc63c" />
        <path d="M8.500 20c3-1 5-1 7.500 0l-1.500 8c-3-1-5-1-7.500 0z" fill="#4aa0e8" />
        <path d="M17.500 20.500c3 1.500 6 1 9-.5l-1.500 8c-3 2-6 1.500-9 .5z" fill="#f8cf3a" />
      </svg>
    </button>
    <button aria-label="Internet Explorer" className="mr-4 ml-[26px]">
      <svg width="34" height="34" viewBox="0 0 34 34">
        <path d="M29 22c-4 10-22 9-23-4C6 4 29 2 30 19v1H14c1 6 7 5 8 2z" fill="#23a0f0" />
        <path d="M14 15h8c0-5-8-5-8 0z" fill="#1c6796" />
        <path d="M5 31C-3 29 7 12 17 6s18-6 14 4c1-7-6-4-13 1S4 25 5 31z" fill="#f6c83a" />
      </svg>
    </button>
    <div className="flex h-full min-w-0 items-center gap-1">
      {tasks.map((t, i) => (
        <button key={i} className={`flex h-[37px] items-center gap-1 overflow-hidden rounded-[3px] border border-[#a9c8dd] bg-linear-to-b pl-2 whitespace-nowrap ${t.look}`}>
          <span className="shrink-0">{t.icon}</span>
          <span>{t.label}</span>
        </button>
      ))}
    </div>
    <div className="h-full w-[54px] bg-[linear-gradient(48deg,transparent_40%,#8fabc9_50%,transparent_60%)]" />
    <div className="ml-auto flex items-center gap-2">
      <span className="mr-[7px] flex"><Icon name="keyboard" /></span>
      {['dragonfly', 'paw', 'stick', 'sync', 'power', 'eject', 'mute', 'signal'].map((n) => <Icon key={n} name={n} />)}
    </div>
    <time className="ml-4 w-[58px] text-center leading-[18px]">20:46<br />2017/11/2</time>
    <button aria-label="显示桌面" className="ml-2 h-full w-[15px] border border-[#6c93b5] bg-linear-to-br from-[#53799f] to-[#12345c]" />
  </nav>
)

const menus = ['工程(P)', '编辑(E)', '搜索/替换(F)', '转换(C)', '视图(V)', '在线(O)', '调试(B)', '诊断(D)', '工具(T)', '窗口(W)', '帮助(H)']

const TitleBar = () => (
  <header className="relative flex h-[22px] shrink-0 items-center border-b border-[#2b4468] bg-[linear-gradient(90deg,#9db9de_0,#a3bbdc_480px,#4472b2_520px,#4472b2_100%)] text-black">
    <Icon name="melsoft" />
    <h1 className="ml-[6px] flex-1 whitespace-nowrap">MELSOFT GX Works3 C:\Users\Administrator\Desktop\000.gx3 - [模块参数 485串口]</h1>
    <svg width="56" height="12" viewBox="0 0 56 12" className="absolute top-0 right-[200px]" aria-hidden="true">
      <rect x="4" y="3" width="51" height="6" rx="3" fill="#415a78" />
      <path d="M6 6h28" stroke="#2ab4ea" strokeWidth="2" />
      <circle cx="6" cy="6" r="5" fill="#3ac2f2" stroke="#35597c" />
    </svg>
    <div className="mr-[2px] flex h-[18px] self-start overflow-hidden rounded-b border border-t-0 border-[#dfe8f4]">
      <button aria-label="最小化" className="flex w-7 items-end justify-center bg-linear-to-b from-[#a9bdd8] to-[#6583ac] pb-1"><span className="h-1 w-3 border border-[#4b5a70] bg-white" /></button>
      <button aria-label="还原" className="flex w-[27px] items-center justify-center border-x border-[#dfe8f4] bg-linear-to-b from-[#a9bdd8] to-[#6583ac]">
        <svg width="13" height="12" viewBox="0 0 13 12"><path d="M4 1h8v7H4zM1 4h8v7H1z" fill="#fff" stroke="#4b5a70" /><path d="M3.500 6.500h3v2h-3z" fill="#6583ac" stroke="#4b5a70" /></svg>
      </button>
      <button aria-label="关闭窗口" className="flex w-[47px] items-center justify-center bg-linear-to-b from-[#e0a091] via-[#c8452c] to-[#c05a40]">
        <svg width="12" height="10" viewBox="0 0 12 10"><path d="M2 1l8 8M10 1L2 9" stroke="#4b3a40" strokeWidth="4" /><path d="M2 1l8 8M10 1L2 9" stroke="#fff" strokeWidth="2.500" /></svg>
      </button>
    </div>
  </header>
)

export default function App() {
  return (
    <div className={`relative flex h-screen flex-col overflow-hidden bg-[#2c3d5b] text-[12px] leading-4 ${UI}`}>
      <TitleBar />
      <div className="flex h-7 shrink-0 items-center bg-linear-to-b from-[#cad3e2] to-[#aebacd] pr-[6px] text-[#1b293e]">
        <span className="mr-[10px] ml-[6px] h-4 border-l-2 border-dotted border-[#6b7a94]" />
        <div className="flex gap-4">
          {menus.map((m) => <button key={m}>{m}</button>)}
        </div>
        <svg width="42" height="11" viewBox="0 0 42 11" className="ml-auto" aria-hidden="true">
          <path d="M1 9h7" stroke="#1b293e" strokeWidth="2" />
          <path d="M19 1h6v5h-6zM17 4h6v5h-6z" fill="#bcc7d8" stroke="#1b293e" />
          <path d="M34 1l7 7M41 1l-7 7" stroke="#1b293e" strokeWidth="2" />
        </svg>
      </div>
      <div className="shrink-0 bg-[#9ca9c0] pl-[2px]">
        <div className="flex h-7 items-stretch gap-[3px] pb-px">
          <Bar className="pl-[2px]">
            <Grip />
            <Tools list="new open save print | help" />
            <span className="relative mr-[3px] ml-px flex h-[22px] w-[98px] items-center">
              <input aria-label="帮助搜索" className="h-full w-full bg-white px-1" />
              <span className="absolute top-0 right-0 flex h-[22px] w-[13px] items-center justify-center border border-white bg-[#bcc7d8] text-[#1b293e]"><Caret /></span>
            </span>
            <Overflow />
          </Bar>
          <Bar className="pl-px">
            <Grip />
            <Tools list="cut copy paste undo redo | devFind cmdFind ladderFind | write read monStart monStop monStartOff monStopOff | devMon devMonOff | comment verify comment2 | simOn simOff | simSave | zoomIn zoomOut fit" />
            <span className="mr-[2px] ml-px flex h-6 w-[69px] items-center justify-end border border-[#8a8a8a] bg-[#ededed] pr-[3px] text-[#7b7b7b]"><Caret /></span>
            <Overflow />
          </Bar>
          <Bar className="min-w-0 flex-1 pl-px">
            <Grip />
            <Tools list="usb | play warn ok" />
            <span className="relative ml-px flex h-[22px] w-[129px]">
              <select aria-label="扫描时间" className="h-full w-full appearance-none bg-white px-[3px] text-black">
                <option>最大: 0.617ms</option>
              </select>
              <span className="pointer-events-none absolute top-0 right-0 flex h-[22px] w-[13px] items-center justify-center border border-white bg-[#bcc7d8] text-[#1b293e]"><Caret /></span>
            </span>
            <span className="flex-1" />
            <Overflow />
          </Bar>
        </div>
        <div className="flex h-[25px]">
          <Bar className="pl-[2px]">
            <Grip />
            <Tools list="navTree* conn | chip | win* winDots* | bino winFind* | devFind+ devTable devTree | edit io | spray | devEye+ | trace+" />
            <Overflow />
          </Bar>
        </div>
      </div>
      <main className="flex min-h-0 flex-1 gap-1">
        <NavPanel />
        <div className="flex min-w-0 flex-1 flex-col">
          <Document />
          <Progress />
        </div>
      </main>
      <StatusBar />
      <Taskbar />
      <div className="absolute top-[55px] left-[702px] flex h-[50px] w-[50px] items-center justify-center rounded bg-[#4b5566]/80">
        <svg width="24" height="30" viewBox="0 0 24 30" aria-hidden="true">
          <path d="M5 2h14v5H5z" fill="#eceef1" />
          <path d="M7 4h4M13 4h4" stroke="#4b5566" strokeWidth="1.500" />
          <path d="M1 8h22v9a11 12 0 01-22 0z" fill="#eceef1" />
        </svg>
      </div>
    </div>
  )
}
